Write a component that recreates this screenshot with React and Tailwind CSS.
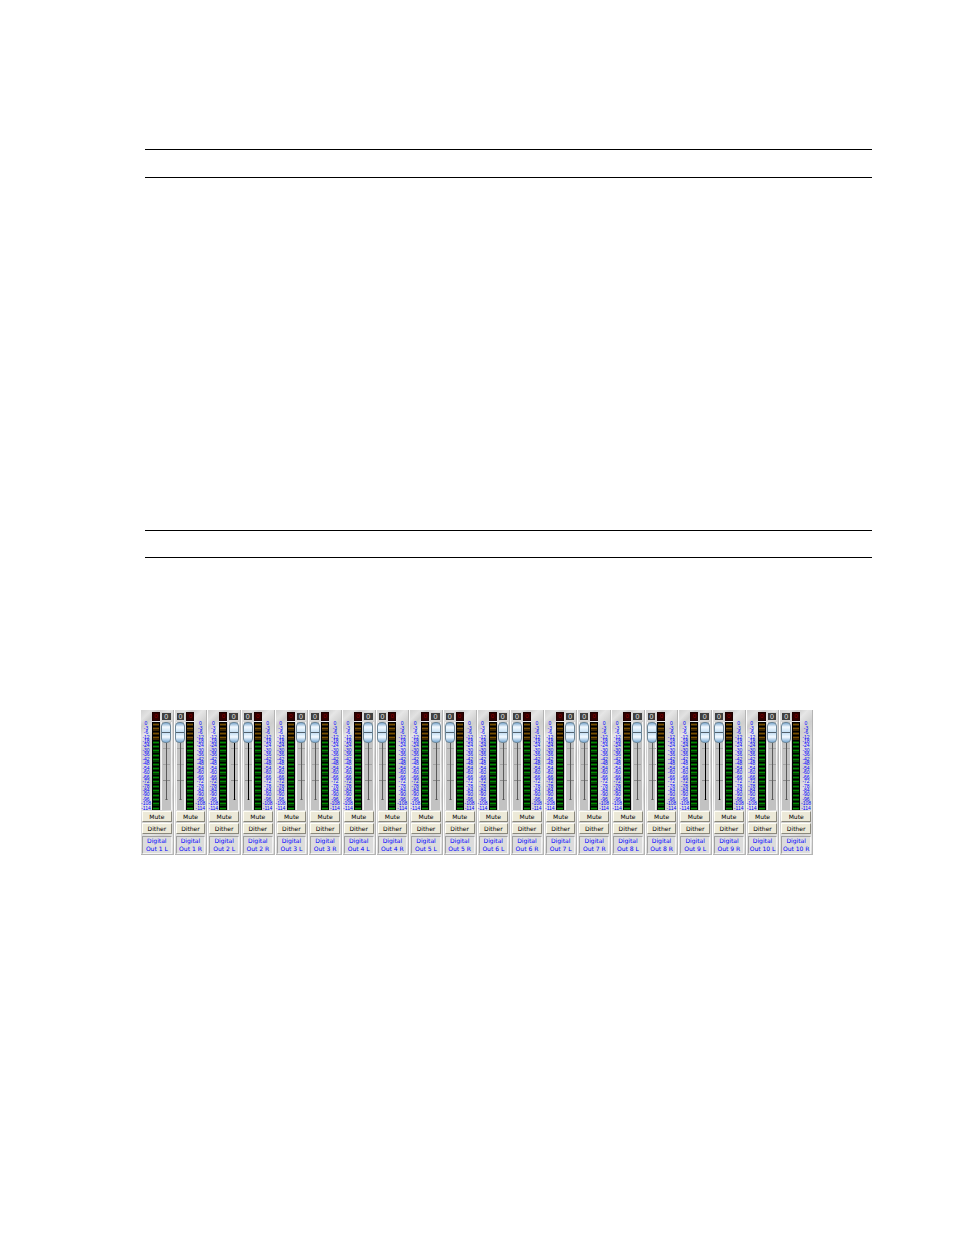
import { useState } from 'react';

const scale = [0, -3, -6, -12, -18, -24, -30, -36, -42, -48, -54, -60, -66, -72, -78, -84, -90, -96, -108, -114];

const outputs = [1, 2, 3, 4, 5, 6, 7, 8, 9, 10].flatMap((n) => [
  { id: `${n}L`, number: n, side: 'L' },
  { id: `${n}R`, number: n, side: 'R' }
]);

// channels whose fader groove is drawn in solid black
const darkGrooves = ['2L', '2R', '9L', '9R'];

const buttonClass =
  'mx-px h-[11px] border border-[#fffef6] border-r-[#8a887c] border-b-[#8a887c] bg-[#ece9d8] text-center text-[6px] leading-[9px] text-black';

const stripBackground =
  'bg-[linear-gradient(135deg,#d2d2d2_0%,#e2e2e2_6%,#cccccc_10%,#e6e6e6_16%,#cfcfcf_24%,#dedede_36%,#d0d0d0_46%,#e2e2e2_58%,#d0d0d0_66%,#e4e4e4_76%,#d4d4d4_84%,#e6e6e6_92%,#d6d6d6_100%)]';

const thumbClass =
  '[&::-webkit-slider-thumb]:h-[21px] [&::-webkit-slider-thumb]:w-[10px] [&::-webkit-slider-thumb]:appearance-none [&::-webkit-slider-thumb]:rounded-[4px] [&::-webkit-slider-thumb]:border [&::-webkit-slider-thumb]:border-[#6e8798] [&::-webkit-slider-thumb]:bg-[linear-gradient(180deg,#7faad0_0px,#f4faff_4px,#c4dff4_9px,#52606b_9px,#52606b_10px,#c4dff4_10px,#f4faff_14px,#7cacd6_19px)]';

function Scale() {
  return (
    <div className="flex w-[10px] shrink-0 flex-col pt-[9px] text-center text-[5px] text-[#0000ff]">
      {scale.map((db) => (
        <span key={db} className="flex min-h-0 flex-1 items-center justify-center leading-[4px]">
          {db}
        </span>
      ))}
    </div>
  );
}

function Meter({ name }) {
  return (
    <div className="flex w-[8px] shrink-0 flex-col">
      <div className="mb-px flex h-[9px] items-center justify-center border border-[#1c0000] bg-[#300000] text-[6px] leading-[7px] text-[#8c0000]">
        0
      </div>
      <div
        role="meter"
        aria-label={`${name} level`}
        aria-valuemin={-114}
        aria-valuemax={0}
        aria-valuenow={-114}
        className="flex flex-1 flex-col bg-black px-px"
      >
        {scale.map((db) => (
          <span
            key={db}
            className={`min-h-0 flex-1 border-t border-black ${
              db > -18
                ? 'bg-[linear-gradient(180deg,#2e1e00_1px,#785000_1px,#785000_2px,#382400_2px)]'
                : 'bg-[linear-gradient(180deg,#003400_1px,#008a00_1px,#008a00_2px,#003c00_2px)]'
            }`}
          />
        ))}
      </div>
    </div>
  );
}

function Fader({ name, dark }) {
  const [level, setLevel] = useState(100);
  const groove = dark
    ? 'bg-[linear-gradient(#000,#000),linear-gradient(#a4a4a4,#a4a4a4),linear-gradient(#a4a4a4,#a4a4a4),linear-gradient(#8c8c8c,#8c8c8c),linear-gradient(#8c8c8c,#8c8c8c)]'
    : 'bg-[linear-gradient(#5a5a5a,#5a5a5a),linear-gradient(#a4a4a4,#a4a4a4),linear-gradient(#a4a4a4,#a4a4a4),linear-gradient(#8c8c8c,#8c8c8c),linear-gradient(#8c8c8c,#8c8c8c)]';

  return (
    <div className="flex min-w-0 flex-1 flex-col">
      <output className="mb-px flex h-[9px] items-center justify-center border border-[#d8d8d8] bg-[#404040] text-[7px] leading-[7px] text-[#e4e4e4]">
        {level - 100}
      </output>
      <div className="flex flex-1 justify-center border-x border-[#f4f4f4] bg-[#c2c2c2]">
        <input
          type="range"
          min="0"
          max="100"
          aria-label={`${name} volume`}
          value={level}
          onChange={(e) => setLevel(Number(e.target.value))}
          className={`h-[86px] w-[10px] appearance-none bg-no-repeat [background-position:5px_0,2px_26px,2px_42px,2px_58px,4px_77px] [background-size:1px_78px,7px_1px,7px_1px,7px_1px,3px_1px] [direction:rtl] [writing-mode:vertical-lr] ${thumbClass} ${groove}`}
        />
      </div>
    </div>
  );
}

function ChannelStrip({ number, side, dark }) {
  const [muted, setMuted] = useState(false);
  const [dither, setDither] = useState(false);
  const name = `Digital Out ${number} ${side}`;

  return (
    <section
      aria-label={name}
      className={`flex min-w-0 flex-col border-r border-b border-[#b4b4b4] pt-[2px] ${stripBackground}`}
    >
      <div className={`flex h-[98px] gap-px pr-px ${side === 'R' ? 'flex-row-reverse pl-px' : ''}`}>
        <Scale />
        <Meter name={name} />
        <Fader name={name} dark={dark} />
      </div>

      <div className="mt-px flex flex-col gap-px font-['DejaVu_Sans',Verdana,sans-serif]">
        <button type="button" aria-pressed={muted} onClick={() => setMuted(!muted)} className={buttonClass}>
          Mute
        </button>
        <button type="button" aria-pressed={dither} onClick={() => setDither(!dither)} className={buttonClass}>
          Dither
        </button>
      </div>

      <h2 className="mx-px mt-[2px] h-[18px] border border-t-[#a0a0a0] border-r-[#f4f4f4] border-b-[#f4f4f4] border-l-[#a0a0a0] bg-[#dcdcdc] text-center font-['DejaVu_Sans',Verdana,sans-serif] text-[6px] leading-[8px] whitespace-nowrap text-[#0000ff]">
        <span className="block">Digital</span>
        <span className="block">
          Out {number} {side}
        </span>
      </h2>
    </section>
  );
}

export default function App() {
  return (
    <main className="min-h-screen bg-white pt-[149px] pb-10 font-['Liberation_Sans',Arial,sans-serif]">
      <div className="mr-[82px] ml-[145px] h-[29px] border-y border-black" />
      <div className="mt-[352px] mr-[82px] ml-[145px] h-[28px] border-y border-black" />

      <div className="mx-[141px] mt-[152px] grid grid-cols-20 gap-px">
        {outputs.map((out) => (
          <ChannelStrip
            key={out.id}
            number={out.number}
            side={out.side}
            dark={darkGrooves.includes(out.id)}
          />
        ))}
      </div>
    </main>
  );
}
